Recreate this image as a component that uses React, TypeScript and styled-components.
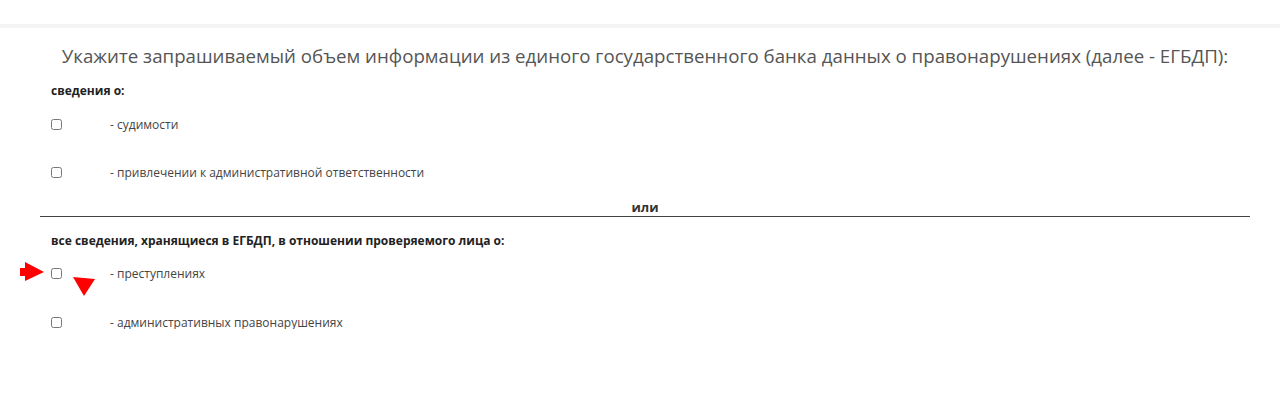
import styled, { createGlobalStyle } from "styled-components";

const GlobalStyle = createGlobalStyle`
    html, body {
        margin: 0;
        padding: 0;
        background: #fff;
        font-family: "Open Sans", "Liberation Sans", sans-serif;
        color: #333;
    }
`;

const TopBar = styled.div`
    height: 24px;
    background: #fff;
    border-bottom: 4px solid #f4f4f4;
`;

const Form = styled.div`
    position: relative;
    margin: 0 30px 0 40px;
    padding-top: 16px;
`;

const Title = styled.h2`
    margin: 0 0 16px;
    text-align: center;
    font-size: 18.7px;
    font-weight: 400;
    color: #555;
    line-height: 24px;
`;

const GroupLabel = styled.div<{ gap?: number }>`
    margin-top: ${(p) => p.gap ?? 0}px;
    padding-left: 11px;
    font-size: 12px;
    font-weight: 700;
    color: #222;
    line-height: 14px;
`;

const Options = styled.div<{ top: number }>`
    display: flex;
    flex-direction: column;
    gap: 34.5px;
    padding: ${(p) => p.top}px 0 0 11px;
`;

const Option = styled.label`
    display: flex;
    align-items: center;
    height: 14px;
    font-size: 12px;
    color: #444;
`;

const Box = styled.input`
    width: 11px;
    height: 11px;
    margin: 0;
    flex: none;
`;

const Text = styled.span`
    margin-left: 48px;
`;

const Divider = styled.div`
    margin-top: 19px;
    padding-bottom: 1px;
    border-bottom: 1px solid #444;
    text-align: center;
    font-size: 13px;
    font-weight: 700;
    color: #333;
    line-height: 16px;
`;

const Mark = styled.svg<{ x: number; y: number }>`
    position: absolute;
    left: ${(p) => p.x}px;
    top: ${(p) => p.y}px;
`;

const CheckRow = ({ text }: { text: string }) => (
    <Option>
        <Box type="checkbox" />
        <Text>{text}</Text>
    </Option>
);

const App = () => {
    return (
        <>
            <GlobalStyle />
            <TopBar />
            <Form>
                <Title>
                    Укажите запрашиваемый объем информации из единого государственного банка данных о правонарушениях (далее - ЕГБДП):
                </Title>
                <GroupLabel>сведения о:</GroupLabel>
                <Options top={19}>
                    <CheckRow text="- судимости" />
                    <CheckRow text="- привлечении к административной ответственности" />
                </Options>
                <Divider>или</Divider>
                <GroupLabel gap={17}>
                    все сведения, хранящиеся в ЕГБДП, в отношении проверяемого лица о:
                </GroupLabel>
                <Options top={19}>
                    <CheckRow text="- преступлениях" />
                    <CheckRow text="- административных правонарушениях" />
                </Options>
                <Mark x={-20} y={234} width="26" height="20" viewBox="0 0 26 20">
                    <path d="M0 6 L5 6 L5 0 L24 10 L5 19 L5 14 L0 14 Z" fill="#f00" />
                </Mark>
                <Mark x={33} y={249} width="22" height="20" viewBox="0 0 22 20">
                    <path d="M0 0 L22 2 L11 19 Z" fill="#f00" />
                </Mark>
            </Form>
        </>
    );
};

export default App;
